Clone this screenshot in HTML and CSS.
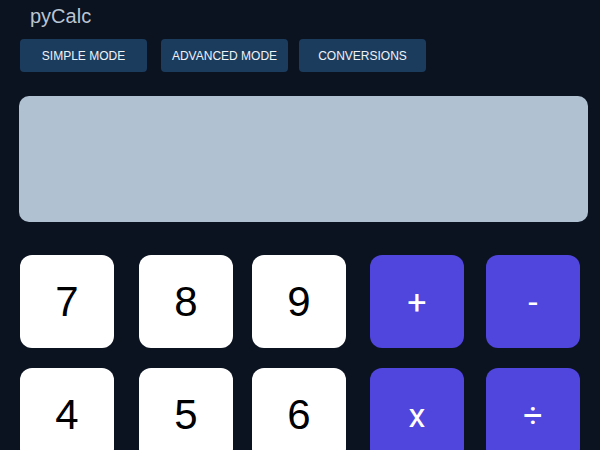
FILE: index.html
```html
<!DOCTYPE html>
<html>
<head>
<meta charset="utf-8">
<link rel="stylesheet" href="styles.css">
</head>
<body>
<div class="app">
  <h1 class="title">pyCalc</h1>
  <nav class="modes">
    <button class="mode">SIMPLE MODE</button>
    <button class="mode">ADVANCED MODE</button>
    <button class="mode">CONVERSIONS</button>
  </nav>
  <div class="display"></div>
  <div class="keys">
    <button class="key num">7</button>
    <button class="key num">8</button>
    <button class="key num">9</button>
    <button class="key op">+</button>
    <button class="key op">-</button>
    <button class="key num">4</button>
    <button class="key num">5</button>
    <button class="key num">6</button>
    <button class="key op">x</button>
    <button class="key op">÷</button>
  </div>
</div>
</body>
</html>
```
FILE: styles.css
```css
html, body {
  margin: 0;
  padding: 0;
  background: #0b1220;
  font-family: "Liberation Sans", Arial, sans-serif;
}
.app {
  padding: 0 0 0 19px;
  width: 600px;
  box-sizing: border-box;
}
.title {
  margin: 0 0 0 11px;
  padding-top: 2px;
  font-size: 20px;
  line-height: 28px;
  font-weight: normal;
  color: #b9c5d2;
}
.modes {
  margin-top: 9px;
  margin-left: 1px;
  display: grid;
  grid-template-columns: 141px 138px 127px;
}
.mode {
  width: 127px;
  height: 33px;
  border: none;
  border-radius: 4px;
  background: #1c3c5e;
  color: #eef3f8;
  font-family: "Liberation Sans", Arial, sans-serif;
  font-size: 12px;
  padding: 0;
}
.display {
  margin-top: 24px;
  width: 569px;
  height: 126px;
  border-radius: 10px;
  background: #b0c1d1;
}
.keys {
  margin-top: 33px;
  margin-left: 1px;
  display: grid;
  grid-template-columns: 119px 113px 118px 116px 94px;
  grid-auto-rows: 93px;
  row-gap: 20px;
}
.key {
  width: 94px;
  height: 93px;
  border: none;
  border-radius: 12px;
  padding: 0;
  font-family: "Liberation Sans", Arial, sans-serif;
}
.num {
  background: #ffffff;
  color: #000000;
  font-size: 42px;
}
.op {
  background: #5045dc;
  color: #ffffff;
  font-size: 34px;
  font-family: Roboto, "Liberation Sans", sans-serif;
  font-weight: 400;
}
```
